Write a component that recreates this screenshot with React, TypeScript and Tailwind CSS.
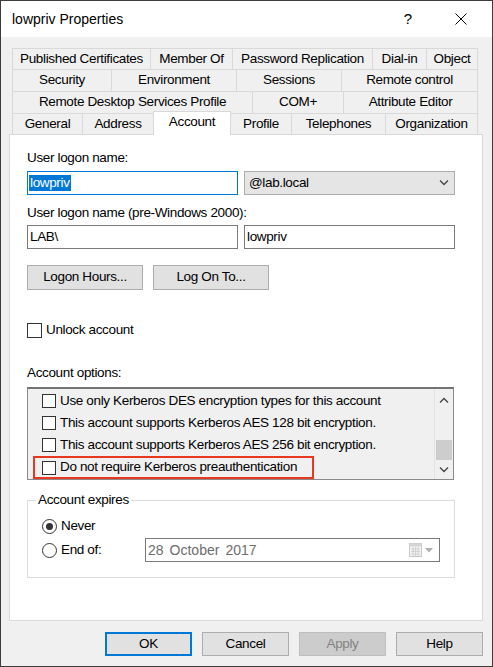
import React from "react"

const base = "font-['Liberation_Sans',Arial,sans-serif] text-[13.5px] tracking-[-0.35px] text-black"

type Tab = { label: string; w: string; active?: boolean }

const tabRows: { h: string; tabs: Tab[] }[] = [
  {
    h: "h-[21px]",
    tabs: [
      { label: "Published Certificates", w: "w-[138px]" },
      { label: "Member Of", w: "w-[82px]" },
      { label: "Password Replication", w: "w-[140px]" },
      { label: "Dial-in", w: "w-[54px]" },
      { label: "Object", w: "w-[52px]" },
    ],
  },
  {
    h: "h-[22px]",
    tabs: [
      { label: "Security", w: "w-[99px]" },
      { label: "Environment", w: "w-[125px]" },
      { label: "Sessions", w: "w-[105px]" },
      { label: "Remote control", w: "w-[137px]" },
    ],
  },
  {
    h: "h-[22px]",
    tabs: [
      { label: "Remote Desktop Services Profile", w: "w-[240px]" },
      { label: "COM+", w: "w-[91px]" },
      { label: "Attribute Editor", w: "w-[135px]" },
    ],
  },
]

const lastRow: Tab[] = [
  { label: "General", w: "w-[70px]" },
  { label: "Address", w: "w-[71px]" },
  { label: "Account", w: "w-[78px]", active: true },
  { label: "Profile", w: "w-[60px]" },
  { label: "Telephones", w: "w-[94px]" },
  { label: "Organization", w: "w-[93px]" },
]

function Checkbox({ size = "w-[14px] h-[14px]" }: { size?: string }) {
  return <div className={`${size} shrink-0 border border-[#333333] bg-white`} />
}

function Radio({ checked }: { checked?: boolean }) {
  return (
    <div className="flex h-[15px] w-[15px] shrink-0 items-center justify-center rounded-full border border-[#333333] bg-white">
      {checked && <div className="h-[7px] w-[7px] rounded-full bg-[#333333]" />}
    </div>
  )
}

function Chevron({ up }: { up?: boolean }) {
  return (
    <svg width="10" height="6" viewBox="0 0 10 6" fill="none">
      <path
        d={up ? "M1 5.5L5 1.5L9 5.5" : "M1 0.5L5 4.5L9 0.5"}
        stroke="#444"
        strokeWidth="1.3"
      />
    </svg>
  )
}

function DlgButton({
  children,
  className = "",
}: {
  children: React.ReactNode
  className?: string
}) {
  return (
    <div
      className={`flex h-[25px] items-center justify-center border border-[#adadad] bg-[#e1e1e1] ${className}`}
    >
      {children}
    </div>
  )
}

const options = [
  "Use only Kerberos DES encryption types for this account",
  "This account supports Kerberos AES 128 bit encryption.",
  "This account supports Kerberos AES 256 bit encryption.",
]

export default function App() {
  return (
    <div
      className={`flex h-[667px] w-[493px] flex-col border border-[#3c3c3c] bg-[#f0f0f0] ${base}`}
    >
      {/* Title bar */}
      <div className="flex h-[36px] shrink-0 items-center justify-between bg-white pl-[11px] pr-[8px]">
        <span className="text-[14px] tracking-normal">lowpriv Properties</span>
        <div className="flex items-center gap-[7px]">
          <div className="flex h-[36px] w-[46px] items-center justify-center text-[15px] tracking-normal">
            ?
          </div>
          <div className="flex h-[36px] w-[46px] items-center justify-center">
            <svg width="12" height="12" viewBox="0 0 12 12">
              <path d="M0.5 0.5L11.5 11.5M11.5 0.5L0.5 11.5" stroke="#000" strokeWidth="1" />
            </svg>
          </div>
        </div>
      </div>

      {/* Tabs */}
      <div className="ml-[11px] mt-[11px] flex flex-col">
        {tabRows.map((row, i) => (
          <div key={i} className={`flex ${row.h}`}>
            {row.tabs.map((t, j) => (
              <div
                key={t.label}
                className={`flex items-center justify-center border-l border-t border-[#d9d9d9] ${t.w} ${
                  j === row.tabs.length - 1 ? "border-r" : ""
                }`}
              >
                {t.label}
              </div>
            ))}
          </div>
        ))}
        <div className="flex h-[21px] items-end">
          {lastRow.map((t, j) =>
            t.active ? (
              <div
                key={t.label}
                className={`relative z-10 -mb-px flex h-[24px] items-center justify-center border-x border-t border-[#d9d9d9] bg-white pb-[2px] ${t.w}`}
              >
                {t.label}
              </div>
            ) : (
              <div
                key={t.label}
                className={`flex h-[21px] items-center justify-center border-t border-[#d9d9d9] ${t.w} ${
                  j === lastRow.length - 1 ? "border-x" : lastRow[j - 1]?.active ? "" : "border-l"
                }`}
              >
                {t.label}
              </div>
            )
          )}
        </div>
      </div>

      {/* Panel */}
      <div className="ml-[8px] flex h-[487px] w-[474px] shrink-0 flex-col border border-[#d9d9d9] bg-white pl-[17px] pt-[15px]">
        <div className="h-[16px] leading-[16px]">User logon name:</div>
        <div className="mt-[5px] flex gap-[6px]">
          <div className="flex h-[24px] w-[211px] items-center border border-[#0078d7] pl-[1px]">
            <span className="bg-[#0078d7] px-[1px] leading-[16px] text-white">lowpriv</span>
          </div>
          <div className="flex h-[24px] w-[211px] items-center justify-between border border-[#adadad] bg-[#e5e5e5] pl-[4px] pr-[5px]">
            <span>@lab.local</span>
            <Chevron />
          </div>
        </div>

        <div className="mt-[10px] h-[16px] leading-[16px]">User logon name (pre-Windows 2000):</div>
        <div className="mt-[4px] flex gap-[6px]">
          <div className="flex h-[24px] w-[211px] items-center border border-[#7a7a7a] bg-white pl-[2px]">
            LAB\
          </div>
          <div className="flex h-[24px] w-[211px] items-center border border-[#7a7a7a] bg-white pl-[2px]">
            lowpriv
          </div>
        </div>

        <div className="mt-[16px] flex gap-[10px]">
          <DlgButton className="w-[116px]">Logon Hours...</DlgButton>
          <DlgButton className="w-[116px]">Log On To...</DlgButton>
        </div>

        <div className="mt-[32px] flex h-[16px] items-center gap-[4px]">
          <Checkbox size="w-[15px] h-[15px]" />
          <span>Unlock account</span>
        </div>

        <div className="mt-[27px] h-[16px] leading-[16px]">Account options:</div>

        {/* Options list */}
        <div className="mt-[6px] flex h-[93px] w-[427px] border border-t-2 border-[#8a8a8a] border-t-[#737373] bg-[#f0f0f0]">
          <div className="flex flex-1 flex-col pt-[1px]">
            {options.map((o) => (
              <div key={o} className="flex h-[22px] items-center gap-[4px] pl-[14px]">
                <Checkbox />
                <span>{o}</span>
              </div>
            ))}
            <div className="ml-[5px] flex h-[23px] w-[281px] items-center gap-[4px] border-2 border-[#e8381f] pl-[7px]">
              <Checkbox />
              <span>Do not require Kerberos preauthentication</span>
            </div>
          </div>
          <div className="flex w-[19px] flex-col border-l border-[#e3e3e3] bg-[#f0f0f0]">
            <div className="flex h-[21px] items-center justify-center">
              <Chevron up />
            </div>
            <div className="h-[30px]" />
            <div className="mx-[1px] h-[20px] bg-[#cdcdcd]" />
            <div className="flex-1" />
            <div className="flex h-[19px] items-center justify-center">
              <Chevron />
            </div>
          </div>
        </div>

        {/* Account expires */}
        <div className="relative mt-[20px] flex h-[78px] w-[428px] flex-col border border-[#dcdcdc] pl-[14px] pt-[16px]">
          <span className="absolute -top-[9px] left-[8px] bg-white px-[2px] leading-[16px]">
            Account expires
          </span>
          <div className="flex h-[18px] items-center gap-[4px]">
            <Radio checked />
            <span>Never</span>
          </div>
          <div className="mt-[3px] flex h-[24px] items-center">
            <div className="flex w-[103px] items-center gap-[4px]">
              <Radio />
              <span>End of:</span>
            </div>
            <div className="flex h-[24px] w-[295px] items-center justify-between border border-[#7a7a7a] bg-white pl-[2px] pr-[6px] text-[14px] tracking-normal text-[#6d6d6d]">
              <div className="flex gap-[6px]">
                <span>28</span>
                <span>October</span>
                <span>2017</span>
              </div>
              <div className="flex items-center gap-[3px]">
                <svg width="13" height="14" viewBox="0 0 13 14">
                  <rect x="0.5" y="0.5" width="12" height="13" fill="#f4f4f4" stroke="#c8c8c8" />
                  <rect x="0.5" y="0.5" width="12" height="3" fill="#d6d6d6" />
                  <path
                    d="M2 6H11M2 8.5H11M2 11H11M4 4V13M6.5 4V13M9 4V13"
                    stroke="#d2d2d2"
                    strokeWidth="1"
                  />
                </svg>
                <svg width="8" height="5" viewBox="0 0 8 5">
                  <path d="M0 0H8L4 4.5Z" fill="#b0b0b0" />
                </svg>
              </div>
            </div>
          </div>
        </div>
      </div>

      {/* Bottom buttons */}
      <div className="mt-[11px] flex justify-end gap-[10px] pr-[9px]">
        <div className="flex h-[24px] w-[87px] items-center justify-center border-2 border-[#0078d7] bg-[#e1e1e1]">
          OK
        </div>
        <div className="flex h-[24px] w-[87px] items-center justify-center border border-[#adadad] bg-[#e1e1e1]">
          Cancel
        </div>
        <div className="flex h-[24px] w-[87px] items-center justify-center border border-[#bfbfbf] bg-[#cccccc] text-[#838383]">
          Apply
        </div>
        <div className="flex h-[24px] w-[87px] items-center justify-center border border-[#adadad] bg-[#e1e1e1]">
          Help
        </div>
      </div>
    </div>
  )
}
